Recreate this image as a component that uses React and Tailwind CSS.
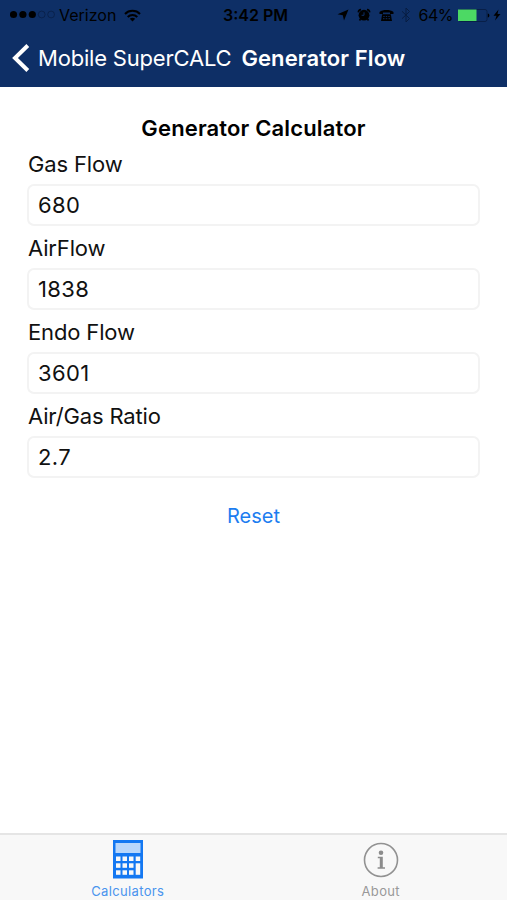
const fields = [
  { label: "Gas Flow", value: "680" },
  { label: "AirFlow", value: "1838" },
  { label: "Endo Flow", value: "3601" },
  { label: "Air/Gas Ratio", value: "2.7" },
];

function StatusBar() {
  return (
    <div className="flex h-[30px] items-center pl-[10px] pr-[6px] text-black">
      <div className="flex flex-1 items-center">
        <svg width="46" height="10" viewBox="0 0 46 10">
          <circle cx="3.5" cy="4.5" r="3.6" />
          <circle cx="12.9" cy="4.5" r="3.6" />
          <circle cx="22.3" cy="4.5" r="3.6" />
          <circle cx="31.7" cy="4.5" r="3.4" fill="none" stroke="#071a3a" strokeWidth="0.6" />
          <circle cx="41.1" cy="4.5" r="3.4" fill="none" stroke="#071a3a" strokeWidth="0.6" />
        </svg>
        <span className="ml-[3px] text-[16px] leading-5">Verizon</span>
        <svg className="ml-[8px]" width="17" height="13" viewBox="0 0 17 13" fill="none" stroke="currentColor" strokeWidth="2">
          <path d="M1 5C5 .8 12 .8 16 5" />
          <path d="M3.7 8C6.5 5.2 10.5 5.2 13.3 8" />
          <path d="M8.5 12.5 5.8 9.8C7.4 8.3 9.6 8.3 11.2 9.8Z" fill="currentColor" stroke="none" />
        </svg>
      </div>
      <span className="text-[16px] font-semibold leading-5">3:42 PM</span>
      <div className="flex flex-1 items-center justify-end">
        <svg width="12" height="12" viewBox="0 0 12 12">
          <path d="M11.5.5 7 11.5 5.8 6.2.5 5.2Z" fill="currentColor" />
        </svg>
        <svg className="ml-[8px]" width="14" height="14" viewBox="0 0 14 14">
          <circle cx="7" cy="7.2" r="5.4" />
          <path d="M1.3 4.3A3 3 0 0 1 4 1.6M12.7 4.3A3 3 0 0 0 10 1.6M3.5 11 2.5 12.5M10.5 11 11.5 12.5" fill="none" stroke="currentColor" strokeWidth="1.6" />
          <path d="M7 4.3V7.3H4.6" fill="none" stroke="#0e2f66" strokeWidth="1" />
        </svg>
        <svg className="ml-[8px]" width="15" height="13" viewBox="0 0 15 13">
          <path d="M.5 5V3C4 .4 11 .4 14.5 3V5H11V3.6H4V5Z" />
          <path d="M3.2 5.2H11.8L13 12H2Z" />
          <path d="M4.3 7.5H5.7M6.8 7.5H8.2M9.3 7.500H10.700M4 9.700H5.500M6.700 9.700H8.300M9.500 9.700H11" stroke="#0e2f66" strokeWidth="0.9" />
        </svg>
        <svg className="ml-[7px]" width="10" height="16" viewBox="0 0 10 16" fill="none" stroke="#071c40" strokeWidth="1">
          <path d="M1 4.3 8.5 11.5 5 15V1L8.5 4.5 1 11.7" />
        </svg>
        <span className="ml-[8px] text-[16px] leading-5 tracking-[-0.5px]">64%</span>
        <svg className="ml-[5px]" width="32" height="13" viewBox="0 0 32 13">
          <rect x=".5" y=".5" width="28.5" height="12" rx="2" fill="none" stroke="#071c40" strokeWidth="0.8" />
          <rect x="0" y=".5" width="18.5" height="11.5" fill="#4cd964" />
          <path d="M29.8 4.5C31.9 5 31.9 8 29.8 8.5Z" />
        </svg>
        <svg className="ml-[3px]" width="8" height="12" viewBox="0 0 8 12">
          <path d="M5.5.5.5 6.8H3.5L2 11.5 7.5 5H4.5Z" />
        </svg>
      </div>
    </div>
  );
}

function Header() {
  return (
    <header className="h-[87px] bg-[#0e2f66]">
      <StatusBar />
      <div className="flex h-[56px] items-center pl-[12px] text-[22px] leading-7 text-white">
        <svg width="18" height="28" viewBox="0 0 18 28" fill="none" stroke="currentColor" strokeWidth="4">
          <path d="M15.8 1.5 3 14 15.8 26.5" />
        </svg>
        <span className="ml-[8px] whitespace-nowrap tracking-[-0.2px]">Mobile SuperCALC</span>
        <h1 className="ml-[10px] whitespace-nowrap font-semibold tracking-[0.1px]">Generator Flow</h1>
      </div>
    </header>
  );
}

function Field({ label, value }) {
  return (
    <label className="block">
      <span className="block h-[42px] pl-px pt-[8px] text-[22px] leading-7 tracking-[-0.15px]">{label}</span>
      <input
        className="block h-[42px] w-full rounded-[7px] border-2 border-[#f3f3f3] bg-white px-[9px] text-[22px] tracking-[0.4px] outline-none"
        defaultValue={value}
      />
    </label>
  );
}

function TabBar() {
  return (
    <nav className="grid h-[67px] grid-cols-2 border-t-2 border-[#e5e5e5] bg-[#f8f8f8] text-[13px] leading-4">
      <button className="flex flex-col items-center pl-[2px] pt-[5px] text-[#4a94ee]">
        <svg width="30" height="39" viewBox="0 0 30 39">
          <rect width="30" height="38.5" fill="#1478f2" />
          <rect x="2.5" y="3" width="25" height="10" fill="#b9d7fb" />
          <g fill="#f8f8f8">
            <rect x="3" y="16.5" width="4.5" height="4.5" />
            <rect x="9.5" y="16.5" width="4.5" height="4.5" />
            <rect x="16" y="16.5" width="4.5" height="4.5" />
            <rect x="22.7" y="16.5" width="4.5" height="4.5" />
            <rect x="3" y="23.3" width="4.5" height="4.5" />
            <rect x="9.5" y="23.3" width="4.5" height="4.5" />
            <rect x="16" y="23.3" width="4.5" height="4.5" />
            <rect x="22.7" y="23.3" width="4.5" height="11.5" />
            <rect x="3" y="30.3" width="4.5" height="4.5" />
            <rect x="9.5" y="30.3" width="4.5" height="4.5" />
            <rect x="16" y="30.3" width="4.5" height="4.5" />
          </g>
        </svg>
        <span className="mt-[4px] tracking-[0.35px]">Calculators</span>
      </button>
      <button className="flex flex-col items-center pl-px pt-[7px] text-[#999]">
        <svg width="36" height="36" viewBox="0 0 36 36">
          <circle cx="18" cy="18" r="16.5" fill="none" stroke="#929292" strokeWidth="1.6" />
          <circle cx="18" cy="10.8" r="2.3" fill="#8c8c8c" />
          <path d="M14.8 14.8H19.8V25.3H22V26.7H14.6V25.3H16.8V16.2H14.8Z" fill="#8c8c8c" />
        </svg>
        <span className="mt-[5px] tracking-[0.35px]">About</span>
      </button>
    </nav>
  );
}

export default function App() {
  return (
    <div className="flex h-[900px] w-[507px] flex-col overflow-hidden bg-white font-['Inter',sans-serif] text-[#111]">
      <Header />
      <main className="flex flex-1 flex-col px-[27px] pt-[27px]">
        <h2 className="h-[28px] text-center text-[22px] font-semibold leading-7 tracking-[0.15px] text-black">
          Generator Calculator
        </h2>
        {fields.map((field) => (
          <Field key={field.label} {...field} />
        ))}
        <button className="mx-auto mt-[24px] text-[20px] leading-7 text-[#1c7df0]">Reset</button>
      </main>
      <TabBar />
    </div>
  );
}
